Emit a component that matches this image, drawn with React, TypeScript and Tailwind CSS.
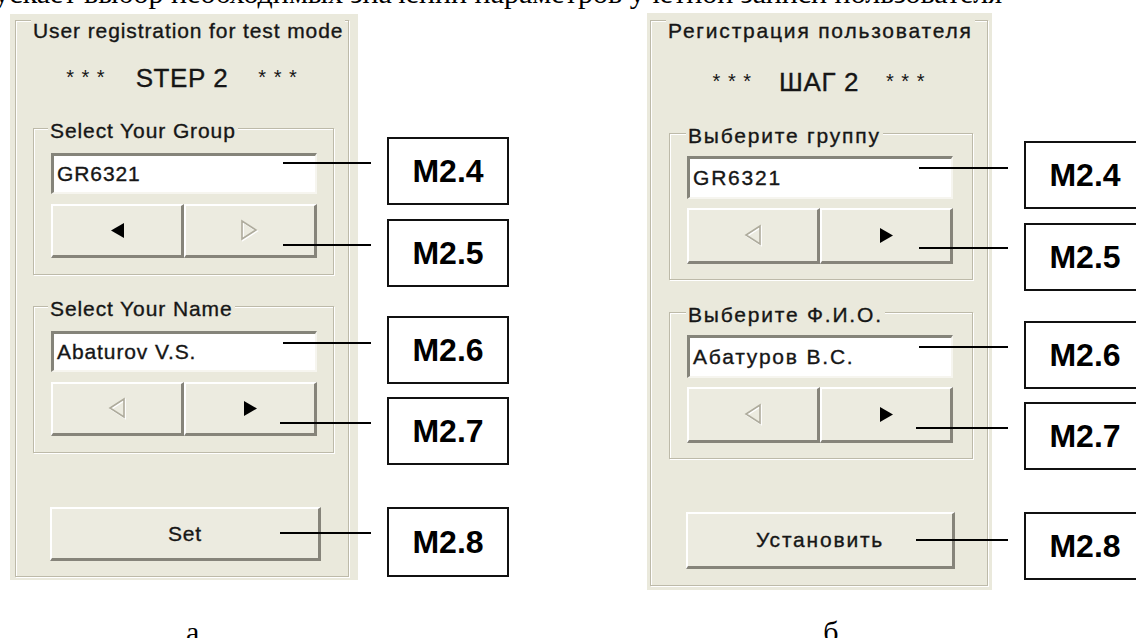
import clsx from "clsx";
import type { ReactNode } from "react";

const UI =
  "font-['Liberation_Sans',Arial,sans-serif] text-[#161616] [-webkit-text-stroke:0.35px_#161616]";
const SERIF = "font-['Liberation_Serif','Times_New_Roman',serif] text-black";

type Dims = {
  panel: string;
  frame: string;
  stepMt: string;
  stepGap: string;
  group1: string;
  group2: string;
  groupTitleMl: string;
  editMt: string;
  editH: string;
  btnMt: string;
  btnH: string;
  set: string;
  track: string;
};

const EN: Dims = {
  panel: "w-[348px] h-[566px] pt-[6px] pl-[5px]",
  frame: "w-[334px] h-[557px]",
  stepMt: "mt-[23px]",
  stepGap: "gap-[30px]",
  group1: "mt-[37px] ml-[17px] w-[301px]",
  group2: "mt-[31px] ml-[17px] w-[301px]",
  groupTitleMl: "ml-[14px]",
  editMt: "mt-[11px]",
  editH: "h-[41px]",
  btnMt: "mt-[10px]",
  btnH: "h-[54px]",
  set: "mt-[54px] ml-[34px] w-[271px] h-[54px]",
  track: "tracking-[0.9px]",
};

const RU: Dims = {
  panel: "w-[345px] h-[577px] pt-[7px] pl-[3px]",
  frame: "w-[338px] h-[566px]",
  stepMt: "mt-[27px]",
  stepGap: "gap-[27px]",
  group1: "mt-[38px] ml-[18px] w-[304px]",
  group2: "mt-[32px] ml-[18px] w-[304px]",
  groupTitleMl: "ml-[16px]",
  editMt: "mt-[9px]",
  editH: "h-[43px]",
  btnMt: "mt-[9px]",
  btnH: "h-[56px]",
  set: "mt-[53px] ml-[35px] w-[269px] h-[57px]",
  track: "tracking-[1.8px]",
};

function Arrow({ dir, on }: { dir: "left" | "right"; on: boolean }) {
  if (on) {
    const pts = dir === "left" ? "16,2 16,17 3,9.5" : "3,2 3,17 16,9.5";
    return (
      <svg width="19" height="19" viewBox="0 0 19 19">
        <polygon points={pts} fill="#000" />
      </svg>
    );
  }
  const a = dir === "left" ? "18,2 18,20 4,11" : "3,2 3,20 17,11";
  const b = dir === "left" ? "19,3 19,21 5,12" : "4,3 4,21 18,12";
  return (
    <svg width="23" height="23" viewBox="0 0 23 23">
      <polygon points={b} fill="none" stroke="#ffffff" strokeWidth="1.8" />
      <polygon points={a} fill="none" stroke="#aeab9c" strokeWidth="1.6" />
    </svg>
  );
}

function Btn({ className, children }: { className?: string; children: ReactNode }) {
  return (
    <div
      className={clsx(
        "flex items-center justify-center bg-[#ecebe0] border-t-2 border-l-2 border-t-white border-l-white border-r-[3px] border-b-[3px] border-r-[#86847a] border-b-[#86847a]",
        className
      )}
    >
      {children}
    </div>
  );
}

function Group({
  d,
  className,
  title,
  value,
  leftOn,
  rightOn,
}: {
  d: Dims;
  className: string;
  title: string;
  value: string;
  leftOn: boolean;
  rightOn: boolean;
}) {
  return (
    <div
      className={clsx(
        "h-[147px] flex flex-col border border-[#bdbaa9] shadow-[inset_1px_1px_0_#ffffff,1px_1px_0_#ffffff]",
        className
      )}
    >
      <div
        className={clsx(
          "-mt-[9px] h-[22px] w-fit px-[2px] bg-[#eae9dc] text-[21px] leading-[22px] whitespace-nowrap",
          d.groupTitleMl,
          d.track
        )}
      >
        {title}
      </div>
      <div
        className={clsx(
          "ml-[17px] w-[266px] flex items-center pl-[3px] bg-white border-t-[3px] border-l-[3px] border-t-[#85847a] border-l-[#85847a] border-b-2 border-r-2 border-b-[#f6f5ef] border-r-[#f6f5ef] text-[21px] leading-[22px] whitespace-nowrap",
          d.editMt,
          d.editH,
          d.track
        )}
      >
        {value}
      </div>
      <div className={clsx("ml-[17px] w-[266px] flex", d.btnMt)}>
        <Btn className={clsx("w-[133px]", d.btnH)}>
          <Arrow dir="left" on={leftOn} />
        </Btn>
        <Btn className={clsx("w-[133px]", d.btnH)}>
          <Arrow dir="right" on={rightOn} />
        </Btn>
      </div>
    </div>
  );
}

type Texts = {
  title: string;
  step: string;
  g1: string;
  g2: string;
  group: string;
  name: string;
  set: string;
  arrows1: [boolean, boolean];
};

function Panel({ d, t }: { d: Dims; t: Texts }) {
  return (
    <div className={clsx("shrink-0 bg-[#eae9dc]", d.panel, UI)}>
      <div
        className={clsx(
          "flex flex-col border border-[#bdbaa9] shadow-[inset_1px_1px_0_#ffffff,1px_1px_0_#ffffff]",
          d.frame
        )}
      >
        <div
          className={clsx(
            "-mt-[1px] ml-[15px] h-[22px] w-fit px-[2px] bg-[#eae9dc] text-[21px] leading-[22px] whitespace-nowrap",
            d.track
          )}
        >
          {t.title}
        </div>
        <div className={clsx("h-[26px] flex justify-center items-start", d.stepMt, d.stepGap)}>
          <span className="mt-[1px] text-[20px] leading-[22px] tracking-[1px] [-webkit-text-stroke:0px]">
            * * *
          </span>
          <span className="text-[26px] leading-[26px] tracking-[0.6px]">{t.step}</span>
          <span className="mt-[1px] text-[20px] leading-[22px] tracking-[1px] [-webkit-text-stroke:0px]">
            * * *
          </span>
        </div>
        <Group
          d={d}
          className={d.group1}
          title={t.g1}
          value={t.group}
          leftOn={t.arrows1[0]}
          rightOn={t.arrows1[1]}
        />
        <Group d={d} className={d.group2} title={t.g2} value={t.name} leftOn={false} rightOn={true} />
        <Btn className={clsx("text-[21px] leading-[22px]", d.set, d.track)}>{t.set}</Btn>
      </div>
    </div>
  );
}

function Label({ text, className }: { text: string; className: string }) {
  return (
    <div
      className={clsx(
        "w-[122px] h-[68px] shrink-0 flex items-center justify-center border-2 border-[#111] bg-white font-bold text-[32px] leading-none font-['Liberation_Sans',Arial,sans-serif] text-black",
        className
      )}
    >
      {text}
    </div>
  );
}

const enText: Texts = {
  title: "User registration for test mode",
  step: "STEP 2",
  g1: "Select Your Group",
  g2: "Select Your Name",
  group: "GR6321",
  name: "Abaturov V.S.",
  set: "Set",
  arrows1: [true, false],
};

const ruText: Texts = {
  title: "Регистрация пользователя",
  step: "ШАГ 2",
  g1: "Выберите группу",
  g2: "Выберите Ф.И.О.",
  group: "GR6321",
  name: "Абатуров В.С.",
  set: "Установить",
  arrows1: [false, true],
};

export default function App() {
  return (
    <div className="w-[1136px] h-[638px] overflow-hidden bg-white flex flex-col">
      {/* cut-off line of the document text above the figure */}
      <div className="h-[13px] shrink-0 overflow-hidden whitespace-nowrap">
        <div className={clsx("-mt-[22px] -ml-[52px] text-[30px] leading-[30px]", SERIF)}>
          допускает выбор необходимых значений параметров учетной записи пользователя
        </div>
      </div>

      <div className="h-[577px] shrink-0 flex items-start">
        {/* a */}
        <div className="relative ml-[10px] mt-[1px] flex shrink-0">
          <Panel d={EN} t={enText} />
          <div className="ml-[29px] flex flex-col">
            <Label text="M2.4" className="mt-[123px]" />
            <Label text="M2.5" className="mt-[14px]" />
            <Label text="M2.6" className="mt-[29px]" />
            <Label text="M2.7" className="mt-[13px]" />
            <Label text="M2.8" className="mt-[42px] h-[70px]" />
          </div>
          <div className="absolute left-[273px] top-[148px] w-[88px] h-[2px] bg-black" />
          <div className="absolute left-[273px] top-[230px] w-[88px] h-[2px] bg-black" />
          <div className="absolute left-[273px] top-[328px] w-[88px] h-[2px] bg-black" />
          <div className="absolute left-[270px] top-[408px] w-[91px] h-[2px] bg-black" />
          <div className="absolute left-[270px] top-[518px] w-[91px] h-[2px] bg-black" />
        </div>

        {/* б */}
        <div className="relative ml-[138px] flex shrink-0">
          <Panel d={RU} t={ruText} />
          <div className="ml-[32px] flex flex-col">
            <Label text="M2.4" className="mt-[128px]" />
            <Label text="M2.5" className="mt-[14px]" />
            <Label text="M2.6" className="mt-[30px]" />
            <Label text="M2.7" className="mt-[13px]" />
            <Label text="M2.8" className="mt-[42px]" />
          </div>
          <div className="absolute left-[272px] top-[154px] w-[89px] h-[2px] bg-black" />
          <div className="absolute left-[272px] top-[234px] w-[89px] h-[2px] bg-black" />
          <div className="absolute left-[272px] top-[333px] w-[89px] h-[2px] bg-black" />
          <div className="absolute left-[269px] top-[414px] w-[92px] h-[2px] bg-black" />
          <div className="absolute left-[269px] top-[526px] w-[92px] h-[2px] bg-black" />
        </div>
      </div>

      <div className={clsx("mt-[27px] flex text-[30px] leading-[30px]", SERIF)}>
        <span className="ml-[186px]">а</span>
        <span className="ml-[624px]">б</span>
      </div>
    </div>
  );
}
